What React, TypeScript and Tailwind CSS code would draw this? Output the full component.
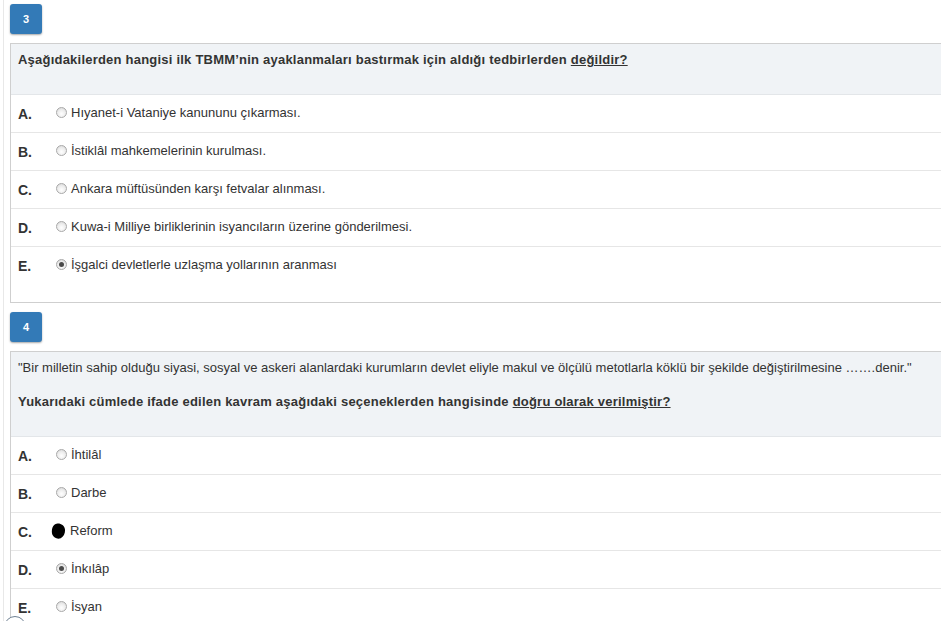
import React from "react";

type Option = { letter: string; text: string; checked?: boolean; scribble?: boolean };

const q3: Option[] = [
  { letter: "A.", text: "Hıyanet-i Vataniye kanununu çıkarması." },
  { letter: "B.", text: "İstiklâl mahkemelerinin kurulması." },
  { letter: "C.", text: "Ankara müftüsünden karşı fetvalar alınması." },
  { letter: "D.", text: "Kuwa-i Milliye birliklerinin isyancıların üzerine gönderilmesi." },
  { letter: "E.", text: "İşgalci devletlerle uzlaşma yollarının aranması", checked: true },
];

const q4: Option[] = [
  { letter: "A.", text: "İhtilâl" },
  { letter: "B.", text: "Darbe" },
  { letter: "C.", text: "Reform", scribble: true },
  { letter: "D.", text: "İnkılâp", checked: true },
  { letter: "E.", text: "İsyan" },
];

function Radio({ checked }: { checked?: boolean }) {
  return (
    <span className="w-[11px] h-[11px] rounded-full border border-[#a9a9a9] bg-[radial-gradient(circle_at_50%_65%,#ffffff_0%,#ececec_55%,#cfcfcf_100%)] flex items-center justify-center shrink-0">
      {checked && <span className="w-[5px] h-[5px] rounded-full bg-[#4a4a4a]" />}
    </span>
  );
}

function Scribble() {
  return (
    <svg width="15" height="16" viewBox="0 0 14 16" className="shrink-0 -ml-[5px] mt-[1px]">
      <path
        d="M6 0.5 C9.5 0.2 12.8 2.5 13.4 6 C14 9.5 12.6 13.6 9.2 15.2 C6 16.4 2.2 15 0.9 11.8 C-0.3 8.6 0.4 4.2 2.6 2.1 C3.5 1.2 4.7 0.6 6 0.5 Z"
        fill="#000"
      />
    </svg>
  );
}

function Badge({ n }: { n: number }) {
  return (
    <div className="w-[32px] h-[30px] rounded-[3px] bg-[#337ab7] shadow-[0_1px_2px_rgba(0,0,0,0.35)] flex items-center justify-center text-white text-[11px] font-bold">
      {n}
    </div>
  );
}

function Rows({ options }: { options: Option[] }) {
  return (
    <div>
      {options.map((o, i) => (
        <div
          key={o.letter}
          className={`flex items-center pl-[7px] pb-[2px] text-[13px] text-[#333] ${i > 0 ? "h-[38px] border-t border-[#e6e6e6]" : "h-[37px]"}`}
        >
          <span className="w-[38px] font-bold text-[14px] text-[#333] pt-[3px]">{o.letter}</span>
          {o.scribble ? <Scribble /> : <Radio checked={o.checked} />}
          <span className={o.scribble ? "ml-[4px]" : "ml-[4px]"}>{o.text}</span>
        </div>
      ))}
    </div>
  );
}

export default function App() {
  return (
    <div
      className="w-[941px] h-[621px] overflow-hidden bg-white relative"
      style={{ fontFamily: '"Liberation Sans", Arial, sans-serif' }}
    >
      <div className="ml-[3px] border-l border-[#e8e8e8] pl-[6px] pt-[4px] min-h-[700px]">
        <Badge n={3} />
        <div className="mt-[9px] w-[960px] border border-[#cfcfcf] pb-[18px]">
          <div className="bg-[#f0f3f6] border-b border-[#e3e6e9] pl-[7px] pt-[6px] pb-[24px]">
            <p className="text-[13px] leading-[20px] font-bold tracking-[0.22px] text-[#333]">
              Aşağıdakilerden hangisi ilk TBMM’nin ayaklanmaları bastırmak için aldığı tedbirlerden{" "}
              <span className="underline">değildir?</span>
            </p>
          </div>
          <Rows options={q3} />
        </div>

        <div className="mt-[9px]">
          <Badge n={4} />
        </div>
        <div className="mt-[9px] w-[960px] border border-[#cfcfcf] pb-[18px]">
          <div className="bg-[#f0f3f6] border-b border-[#e3e6e9] pl-[7px] pt-[6px] pb-[24px]">
            <p className="text-[13px] leading-[20px] text-[#333]">
              "Bir milletin sahip olduğu siyasi, sosyal ve askeri alanlardaki kurumların devlet eliyle makul ve ölçülü metotlarla köklü bir şekilde değiştirilmesine …….denir."
            </p>
            <p className="mt-[14px] text-[13px] leading-[20px] font-bold tracking-[0.22px] text-[#333]">
              Yukarıdaki cümlede ifade edilen kavram aşağıdaki seçeneklerden hangisinde{" "}
              <span className="underline">doğru olarak verilmiştir?</span>
            </p>
          </div>
          <Rows options={q4} />
        </div>
      </div>
      <div className="absolute left-[4px] top-[616px] w-[22px] h-[22px] rounded-full border border-[#6f8193] bg-white" />
    </div>
  );
}
